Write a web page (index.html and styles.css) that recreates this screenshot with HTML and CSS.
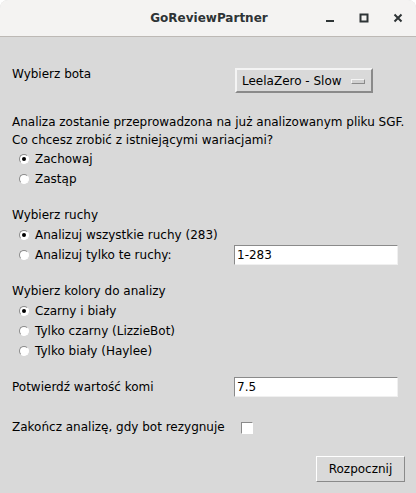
FILE: index.html
```html
<!DOCTYPE html>
<html lang="pl">
<head>
<meta charset="utf-8">
<title>GoReviewPartner</title>
<link rel="stylesheet" href="styles.css">
</head>
<body>
<div class="window">
  <div class="titlebar">
    <span class="title">GoReviewPartner</span>
    <div class="controls">
      <svg class="ctl" width="12" height="12" viewBox="0 0 12 12"><rect x="2" y="8" width="8" height="2" fill="#2e3436"/></svg>
      <svg class="ctl" width="12" height="12" viewBox="0 0 12 12"><rect x="2.5" y="2.5" width="7" height="7" fill="none" stroke="#2e3436" stroke-width="2"/></svg>
      <svg class="ctl" width="12" height="12" viewBox="0 0 12 12"><path d="M2.5 2.5 L9.5 9.5 M9.5 2.5 L2.5 9.5" stroke="#2e3436" stroke-width="2" stroke-linecap="butt"/></svg>
    </div>
  </div>
  <div class="content">
    <div class="row row-bot">
      <span class="lbl">Wybierz bota</span>
      <div class="dropdown"><span>LeelaZero - Slow</span><span class="indicator"></span></div>
    </div>

    <p class="para">Analiza zostanie przeprowadzona na już analizowanym pliku SGF.<br>Co chcesz zrobić z istniejącymi wariacjami?</p>
    <div class="radio checked"><span class="dot"></span><span>Zachowaj</span></div>
    <div class="radio"><span class="dot"></span><span>Zastąp</span></div>

    <div class="heading">Wybierz ruchy</div>
    <div class="radio checked"><span class="dot"></span><span>Analizuj wszystkie ruchy (283)</span></div>
    <div class="row">
      <div class="radio"><span class="dot"></span><span>Analizuj tylko te ruchy:</span></div>
      <div class="entry">1-283</div>
    </div>

    <div class="heading">Wybierz kolory do analizy</div>
    <div class="radio checked"><span class="dot"></span><span>Czarny i biały</span></div>
    <div class="radio"><span class="dot"></span><span>Tylko czarny (LizzieBot)</span></div>
    <div class="radio"><span class="dot"></span><span>Tylko biały (Haylee)</span></div>

    <div class="row row-komi">
      <span class="lbl">Potwierdź wartość komi</span>
      <div class="entry">7.5</div>
    </div>

    <div class="row row-resign">
      <span class="lbl">Zakończ analizę, gdy bot rezygnuje</span>
      <span class="check"></span>
    </div>

    <div class="actions">
      <div class="button">Rozpocznij</div>
    </div>
  </div>
</div>
</body>
</html>
```

FILE: styles.css
```css
html, body {
  margin: 0;
  padding: 0;
  background: #ffffff;
}

body {
  font-family: "DejaVu Sans", sans-serif;
  font-size: 12px;
  color: #000000;
}

.window {
  width: 416px;
  height: 493px;
  background: #d9d9d9;
  border-radius: 8px 8px 0 0;
  overflow: hidden;
}

.titlebar {
  box-sizing: border-box;
  height: 37px;
  background: #f4f3f2;
  border-bottom: 1px solid #bdb9b5;
  position: relative;
  display: flex;
  align-items: center;
  justify-content: center;
}

.title {
  font-family: "DejaVu Sans", sans-serif;
  font-weight: bold;
  font-size: 12px;
  color: #2e3436;
  margin-left: 2px;
  margin-top: -1px;
}

.controls {
  position: absolute;
  right: 12px;
  top: 12px;
  display: flex;
  gap: 22px;
}

.ctl {
  display: block;
}

.content {
  padding: 26px 11px 0 12px;
}

.row {
  display: grid;
  grid-template-columns: 222px 1fr;
  align-items: center;
}

.lbl {
  line-height: 20px;
  height: 20px;
}

.row-bot {
  align-items: start;
  height: 30px;
}

.row-bot .lbl {
  margin-top: 1px;
}

.dropdown {
  box-sizing: border-box;
  margin-top: 5px;
  margin-left: 1px;
  width: 138px;
  height: 25px;
  border: 2px solid;
  border-color: #f4f4f4 #8a8a8a #8a8a8a #f4f4f4;
  display: flex;
  align-items: center;
  justify-content: space-between;
  padding: 0 6px 0 5px;
  line-height: 20px;
}

.indicator {
  box-sizing: border-box;
  width: 14px;
  height: 5px;
  border: 1px solid;
  border-color: #f4f4f4 #8a8a8a #8a8a8a #f4f4f4;
  background: #d0d0d0;
  margin-top: 1px;
}

.para {
  margin: 20px 0 0 0;
  line-height: 18px;
}

.heading {
  margin-top: 16px;
  line-height: 20px;
  height: 20px;
}

.radio {
  display: flex;
  align-items: center;
  height: 20px;
  line-height: 20px;
  padding-left: 7px;
  gap: 6px;
}

.dot {
  box-sizing: border-box;
  width: 10px;
  height: 10px;
  border-radius: 50%;
  background: #ffffff;
  border: 1px solid;
  border-color: #8a8a8a #ffffff #ffffff #8a8a8a;
  display: flex;
  align-items: center;
  justify-content: center;
  flex: none;
}

.radio.checked .dot::after {
  content: "";
  width: 4px;
  height: 4px;
  border-radius: 50%;
  background: #000000;
}

.entry {
  box-sizing: border-box;
  width: 164px;
  height: 20px;
  background: #ffffff;
  border: 1px solid;
  border-color: #8a8a8a #f0f0f0 #f0f0f0 #8a8a8a;
  padding-left: 2px;
  line-height: 18px;
}

.row-komi {
  margin-top: 16px;
}

.row-resign {
  margin-top: 20px;
}

.check {
  box-sizing: border-box;
  width: 12px;
  height: 12px;
  background: #ffffff;
  border: 1px solid;
  border-color: #8a8a8a #ffffff #ffffff #8a8a8a;
  margin-left: 7px;
  margin-top: 1px;
}

.actions {
  display: flex;
  justify-content: flex-end;
  margin-top: 19px;
}

.button {
  box-sizing: border-box;
  width: 89px;
  height: 26px;
  border: 1px solid;
  border-color: #ffffff #8a8a8a #8a8a8a #ffffff;
  display: flex;
  align-items: center;
  justify-content: center;
  background: #d9d9d9;
}
```
